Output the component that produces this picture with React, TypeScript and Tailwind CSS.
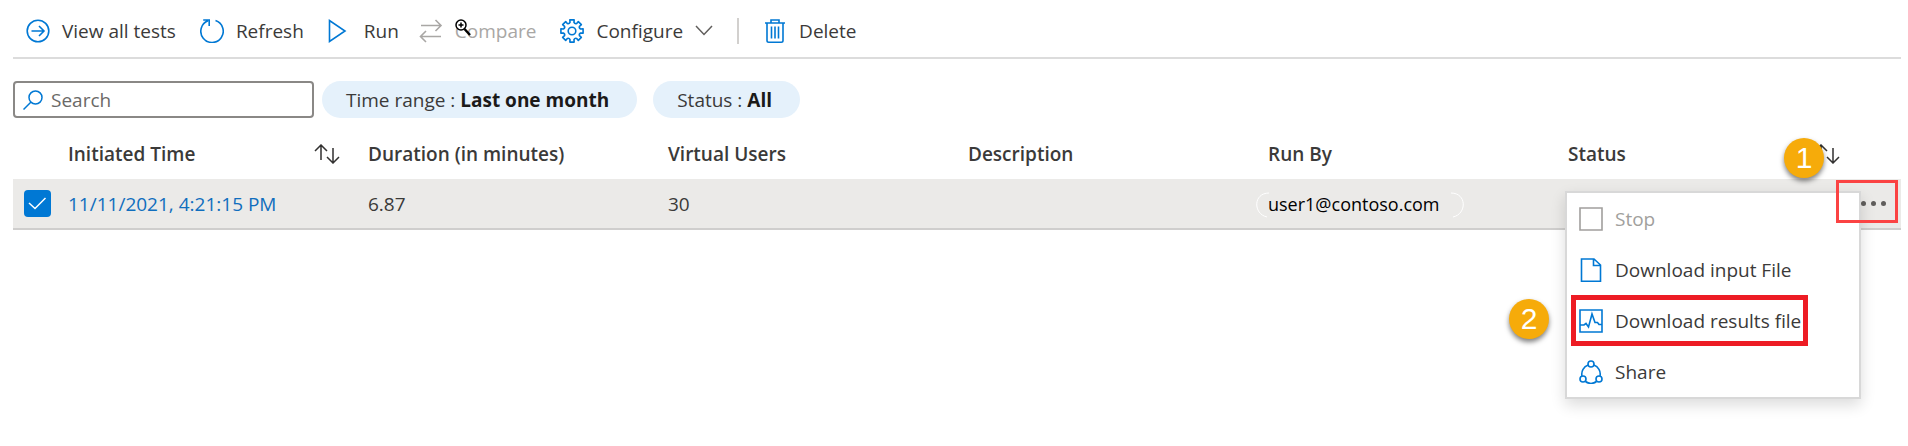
import type { ReactNode } from "react";

const columns = ["Initiated Time", "Duration (in minutes)", "Virtual Users", "Description", "Run By", "Status"];

const Icon = ({ children, className = "text-[#0078d4]" }: { children: ReactNode; className?: string }) => (
  <svg
    viewBox="0 0 24 24"
    fill="none"
    stroke="currentColor"
    strokeWidth="1.6"
    className={`h-6 w-6 shrink-0 ${className}`}
    aria-hidden="true"
  >
    {children}
  </svg>
);

const ArrowCircleIcon = () => (
  <Icon>
    <circle cx="12" cy="12" r="10.8" />
    <path d="M5.5 12h12.500M13 7l5 5-5 5" />
  </Icon>
);

const RefreshIcon = () => (
  <Icon>
    <path d="M15.5 1.6A11.2 11.2 0 1 1 8 1.8M3.2 1h6v6" />
  </Icon>
);

const RunIcon = () => (
  <Icon>
    <path d="M1.5 1.5v21L17 12z" />
  </Icon>
);

const CompareIcon = () => (
  <Icon className="text-[#a9a7a5]">
    <path d="M2 6.5h20M16.5 1l5.5 5.5-5.5 5.5M22 17.5H2M7 12l-5.5 5.5L7 23" />
  </Icon>
);

const gearPath = Array.from({ length: 8 })
  .map((_, i) => {
    const point = (deg: number, r: number) => {
      const a = ((i * 45 + deg) * Math.PI) / 180;
      return `${(12 + r * Math.cos(a)).toFixed(2)} ${(12 + r * Math.sin(a)).toFixed(2)}`;
    };
    return `${i ? "L" : "M"}${point(-11, 11.3)}L${point(11, 11.3)}L${point(13, 8.8)}Q${point(22.5, 7.4)} ${point(32, 8.8)}`;
  })
  .join("");

const GearIcon = () => (
  <Icon>
    <path d={`${gearPath}Z`} strokeLinejoin="round" />
    <circle cx="12" cy="12" r="3.8" />
  </Icon>
);

const TrashIcon = () => (
  <Icon>
    <path d="M2 4h20M4 4v17.5q0 1.7 1.7 1.7h12.600q1.7 0 1.700-1.700V4M8 4V1h8v3M8.5 7.500v12M12 7.500v12M15.5 7.500v12" />
  </Icon>
);

const SortIcon = () => (
  <svg viewBox="0 0 26 20" fill="none" stroke="#323130" strokeWidth="1.5" className="h-5 w-[26px]" aria-hidden="true">
    <path d="M7 16V1.5M1 7l6-6 6 6M19 4v14.500M13 13l6 6 6-6" />
  </svg>
);

const StopIcon = () => (
  <Icon className="text-[#a19f9d]">
    <path d="M1 1h22v22H1z" />
  </Icon>
);

const FileIcon = () => (
  <Icon>
    <path d="M2.5 1H15l6.500 6v16.200H2.500zM14.500 1v6.500h7" />
  </Icon>
);

const ResultsIcon = () => (
  <Icon>
    <path d="M1 1h22v22H1z" />
    <path d="M1 16h4l2-1.500L9.500 18 13 5l3 8.500h2.500l1.500 2h3" />
  </Icon>
);

const ShareIcon = () => (
  <Icon>
    <circle cx="12" cy="4" r="3" />
    <circle cx="4" cy="19" r="3" />
    <circle cx="20" cy="19" r="3" />
    <path d="M9.200 5A9.500 9.500 0 0 0 3 16M14.800 5A9.500 9.500 0 0 1 21 16M6.500 21.500a9.500 9.500 0 0 0 11 0" />
  </Icon>
);

const Cursor = () => (
  <svg viewBox="0 0 16 17" fill="none" className="absolute left-0 top-0 h-[17px] w-4" aria-hidden="true">
    <circle cx="6" cy="6" r="5" fill="#fff" stroke="#000" strokeWidth="1.5" />
    <path d="M3.5 6h5M6 3.500v5" stroke="#000" strokeWidth="1.5" />
    <path d="M9.5 10l5.500 6" stroke="#000" strokeWidth="2.5" />
  </svg>
);

const Badge = ({ value, className }: { value: number; className: string }) => (
  <span
    className={`absolute z-30 flex h-10 w-10 items-center justify-center rounded-full bg-[#f6ab0a] font-['Liberation_Sans',sans-serif] text-[30px] font-normal text-white shadow-[0_3px_5px_rgba(0,0,0,0.5)] ${className}`}
  >
    {value}
  </span>
);

const menuItems = [
  { label: "Stop", icon: <StopIcon />, disabled: true },
  { label: "Download input File", icon: <FileIcon /> },
  { label: "Download results file", icon: <ResultsIcon />, marked: true },
  { label: "Share", icon: <ShareIcon /> },
];

const RowMenu = () => (
  <div className="absolute top-3 right-10 z-10 w-[296px] border-2 border-[#d8d8d8] bg-white shadow-[0_6px_14px_rgba(0,0,0,0.14)]">
    <ul role="menu">
      {menuItems.map((item) => (
        <li key={item.label} role="none" className="relative">
          <button
            role="menuitem"
            disabled={item.disabled}
            className="flex h-[51px] w-full items-center gap-3 pl-3 disabled:text-[#a19f9d]"
          >
            {item.icon}
            {item.label}
          </button>
          {item.marked && (
            <>
              <span className="pointer-events-none absolute inset-y-0 left-1 w-[237px] border-[5px] border-[#ed1c24]" />
              <Badge value={2} className="top-1 -left-[58px]" />
            </>
          )}
        </li>
      ))}
    </ul>
  </div>
);

const Toolbar = () => (
  <nav className="flex h-[59px] items-center border-b-2 border-[#dcdcdc] pt-1 pl-[13px]">
    <button className="mr-6 flex items-center gap-3">
      <ArrowCircleIcon />
      View all tests
    </button>
    <button className="mr-6 flex items-center gap-3">
      <RefreshIcon />
      Refresh
    </button>
    <button className="mr-5 flex items-center gap-3">
      <RunIcon />
      Run
    </button>
    <button disabled className="mr-6 flex items-center gap-3 text-[#a9a7a5]">
      <CompareIcon />
      <span className="relative">
        Compare
        <Cursor />
      </span>
    </button>
    <button className="mr-6 flex items-center gap-3">
      <GearIcon />
      Configure
      <svg viewBox="0 0 18 11" fill="none" stroke="#605e5c" strokeWidth="1.5" className="h-[11px] w-[18px]" aria-hidden="true">
        <path d="M1 1l8 8.500L17 1" />
      </svg>
    </button>
    <span className="mr-6 h-[26px] w-[2px] bg-[#d2d0ce]" />
    <button className="flex items-center gap-3">
      <TrashIcon />
      Delete
    </button>
  </nav>
);

const Filters = () => (
  <div className="mt-[22px] flex h-[37px] items-stretch">
    <div className="flex w-[301px] items-center gap-2 rounded-sm border-2 border-[#8a8886] px-2">
      <svg viewBox="0 0 20 20" fill="none" stroke="#0078d4" strokeWidth="1.5" className="h-5 w-5" aria-hidden="true">
        <circle cx="12.5" cy="7.5" r="6.5" />
        <path d="M8 12l-7.500 7.500" />
      </svg>
      <input
        type="text"
        aria-label="Search"
        placeholder="Search"
        className="min-w-0 flex-1 outline-none placeholder:text-[#6b6967]"
      />
    </div>
    <button className="ml-2 rounded-full bg-[#e5f1fb] pr-7 pl-6">
      Time range : <b className="text-[#1b1a19]">Last one month</b>
    </button>
    <button className="ml-4 rounded-full bg-[#e5f1fb] pr-7 pl-6">
      Status : <b className="text-[#1b1a19]">All</b>
    </button>
  </div>
);

export default function App() {
  return (
    <main className="min-h-screen bg-white pr-[7px] pl-[13px] font-['Open_Sans',sans-serif] text-[19px] leading-6 text-[#3b3a39]">
      <Toolbar />
      <Filters />
      <table className="mt-[11px] w-full table-fixed text-left">
        <colgroup>
          <col className="w-[55px]" />
          <col />
          <col />
          <col />
          <col />
          <col />
          <col />
          <col className="w-[33px]" />
        </colgroup>
        <thead>
          <tr className="h-[50px]">
            <th aria-label="Select" />
            {columns.map((name, index) => (
              <th key={name} className="font-semibold">
                <div className="relative flex items-center justify-between pr-7">
                  {name}
                  {(index === 0 || index === 5) && <SortIcon />}
                  {index === 5 && <Badge value={1} className="-top-1 right-11" />}
                </div>
              </th>
            ))}
            <th aria-label="Actions" />
          </tr>
        </thead>
        <tbody>
          <tr className="h-[50px] border-b-2 border-[#cfcecd] bg-[#ebeae8]">
            <td className="pl-[11px]">
              <span className="relative block h-[27px] w-[27px]">
                <input
                  type="checkbox"
                  defaultChecked
                  aria-label="Select test run"
                  className="block h-[27px] w-[27px] appearance-none rounded-sm bg-[#0078d4]"
                />
                <svg
                  viewBox="0 0 27 27"
                  fill="none"
                  stroke="#fff"
                  strokeWidth="1.5"
                  className="pointer-events-none absolute inset-0"
                  aria-hidden="true"
                >
                  <path d="M5 13l6 5.500L21.500 8" />
                </svg>
              </span>
            </td>
            <td>
              <a href="#run" className="text-[#106ebe]">
                11/11/2021, 4:21:15 PM
              </a>
            </td>
            <td>6.87</td>
            <td>30</td>
            <td />
            <td className="text-lg leading-6 text-black">
              <span className="relative">
                user1@contoso.com
                <svg
                  viewBox="0 0 208 26"
                  fill="none"
                  stroke="#fff"
                  className="absolute top-0 -left-3 h-[26px] w-[208px]"
                  aria-hidden="true"
                >
                  <path d="M13 1C-3 1-3 22 11 25M195 1c16 0 16 21 2 24" />
                </svg>
              </span>
            </td>
            <td colSpan={2} className="relative">
              <button aria-label="More actions" className="ml-auto flex gap-[5px] pr-[15px]">
                <span className="h-[5px] w-[5px] rounded-full bg-[#605e5c]" />
                <span className="h-[5px] w-[5px] rounded-full bg-[#605e5c]" />
                <span className="h-[5px] w-[5px] rounded-full bg-[#605e5c]" />
              </button>
              <RowMenu />
              <span className="pointer-events-none absolute top-px right-[3px] z-20 h-[43px] w-[62px] border-3 border-[#fb4343]" />
            </td>
          </tr>
        </tbody>
      </table>
    </main>
  );
}
